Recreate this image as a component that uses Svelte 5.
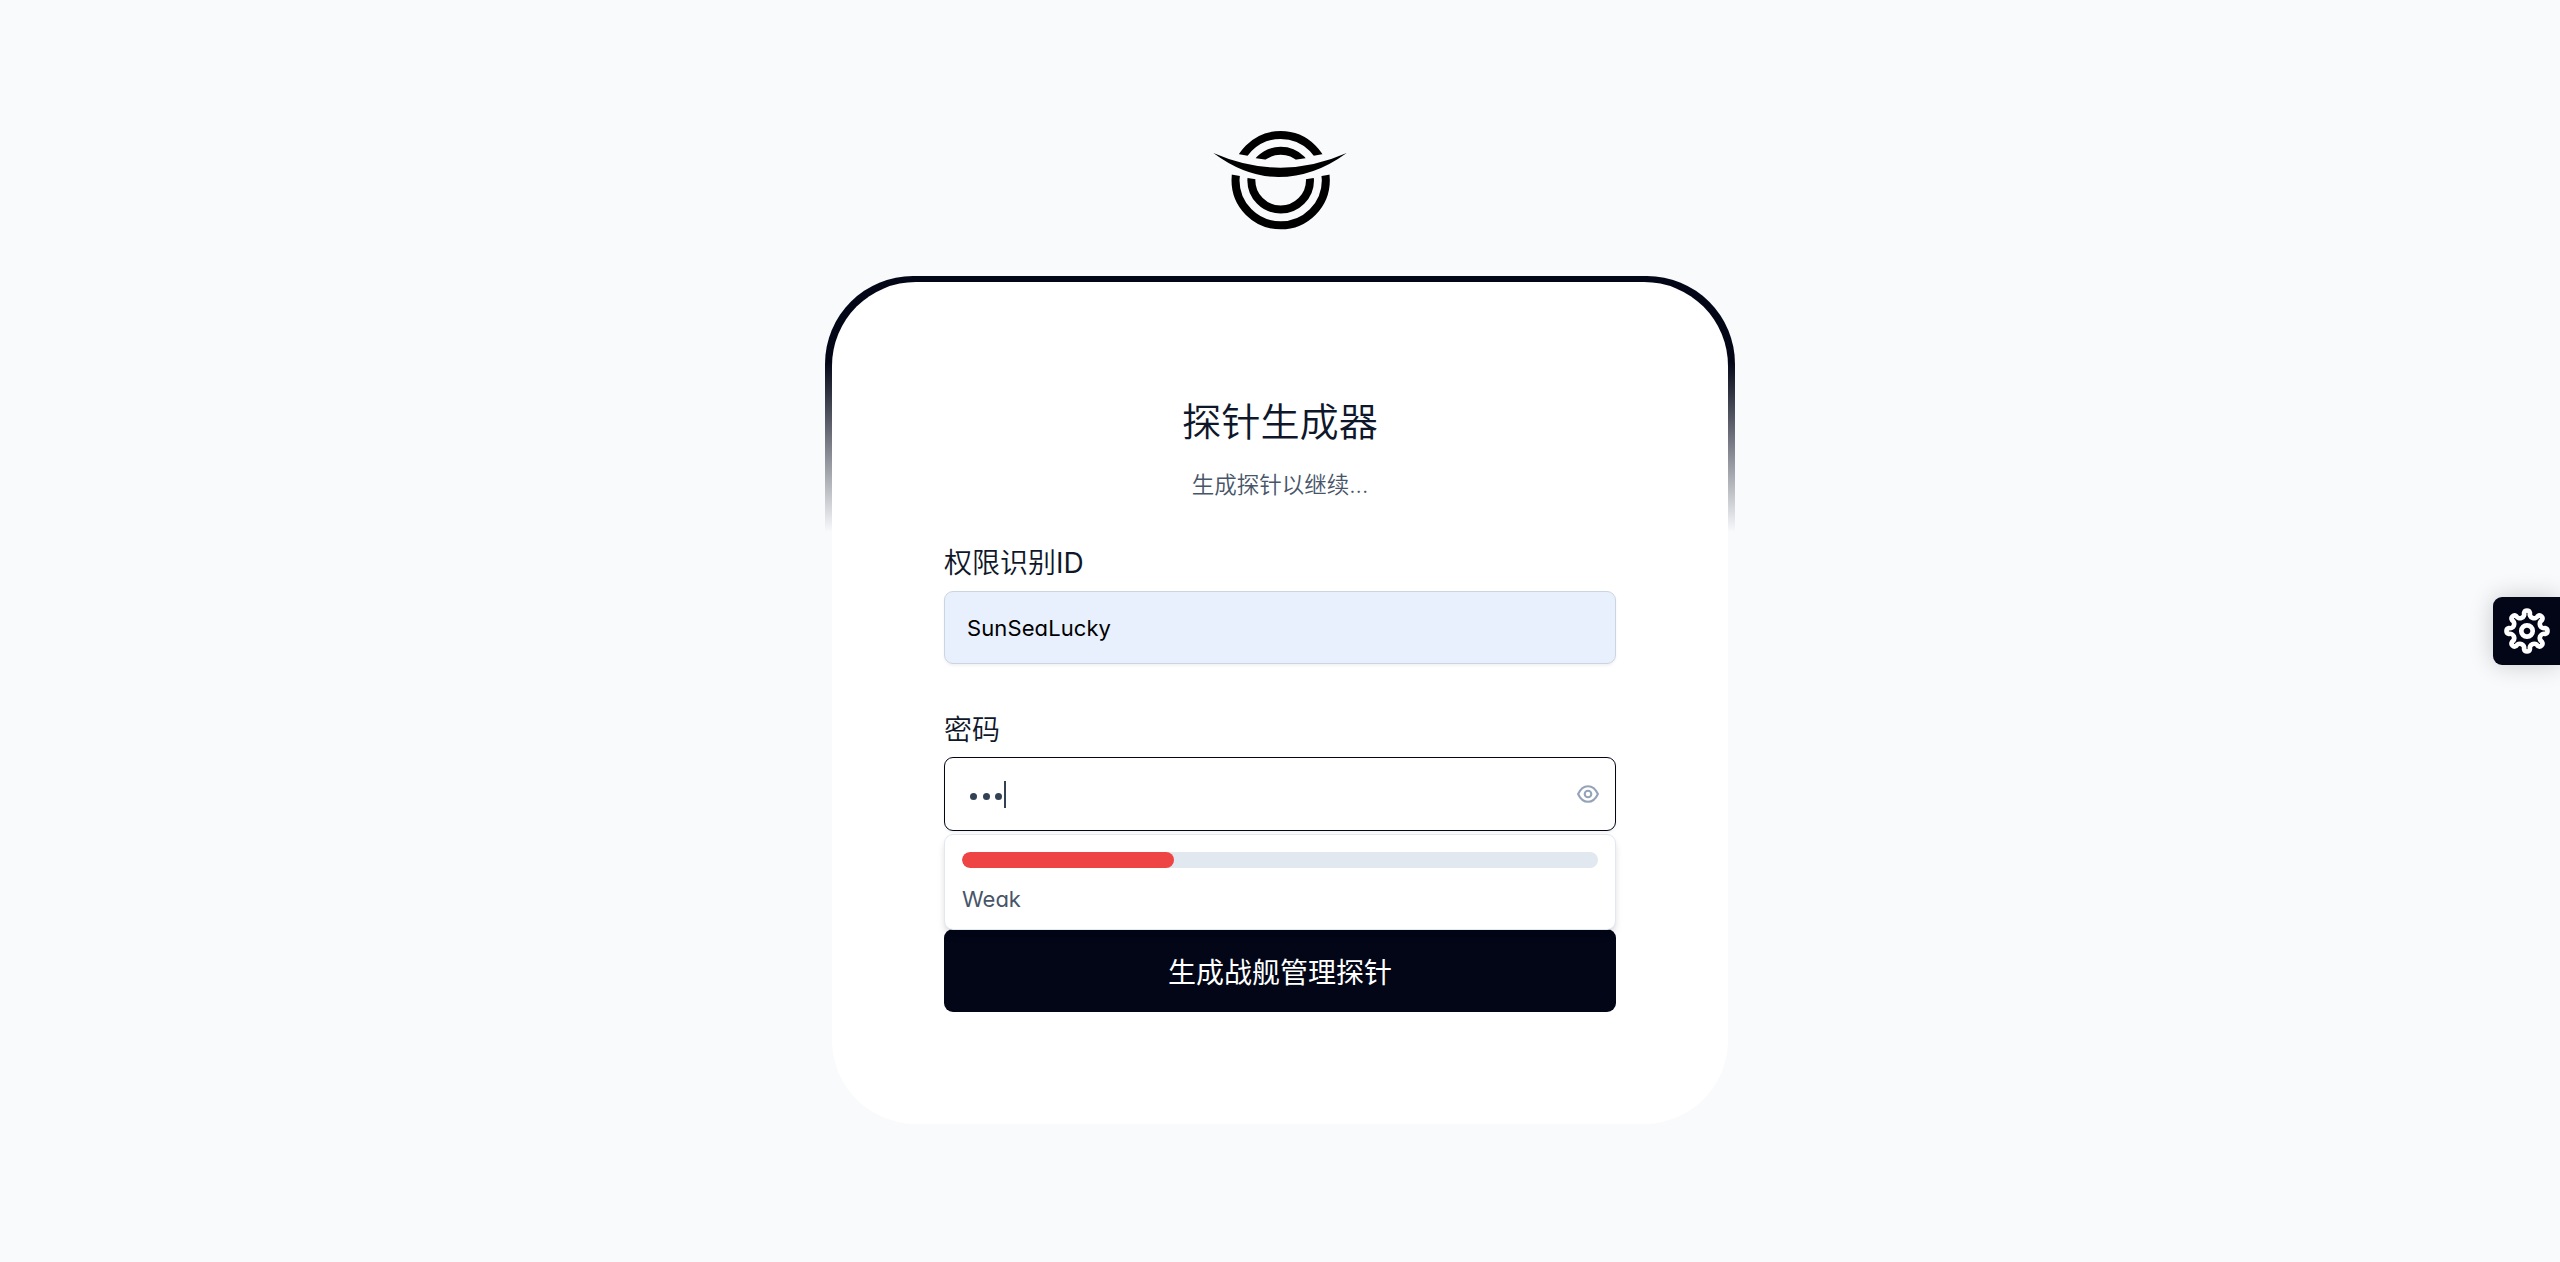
<script>
  let userId = $state('SunSeaLucky');
  let passwordLength = $state(3);
  const strength = { label: 'Weak', value: 33.33 };

  // One lobe plus one valley of the cog outline, repeated every 45 degrees.
  const lobes = Array.from({ length: 8 }, (_, i) => {
    const at = (x, y, a) => {
      const r = (a * Math.PI) / 180;
      return `${(x * Math.cos(r) - y * Math.sin(r)).toFixed(2)} ${(x * Math.sin(r) + y * Math.cos(r)).toFixed(2)}`;
    };
    const a = i * 45;
    return `${i === 0 ? 'M' + at(-2.9, -18.1, a) : ''}A2.95 2.95 0 0 1 ${at(2.9, -18.1, a)}A4.3 4.3 0 0 0 ${at(-2.9, -18.1, a + 45)}`;
  });
  const cogPath = lobes.join('') + 'Z';
</script>

<main class="page">
  <svg class="logo" viewBox="0 0 480 360" aria-label="logo">
    <circle class="ring" cx="242" cy="180.5" r="135.5" />
    <circle class="ring" cx="242" cy="180.5" r="88" />
    <path class="gap" d="M85 96L118 103L147 108L168 115L200 119H285L316 115L337 108L366 103L399 96V162L365 168L341 174L317 178Q242 190 167 178L143 174L120 168L85 162Z" />
    <path d="M40 99Q242 187 440 99Q342 171 235 171Q137 171 40 99Z" />
  </svg>

  <div class="frame">
    <section class="card">
      <h1>探针生成器</h1>
      <p class="subtitle">生成探针以继续...</p>

      <div class="label first">权限识别<span class="latin">ID</span></div>
      <div class="input filled">{userId}</div>

      <div class="label second">密码</div>
      <div class="input focused">
        <div class="dots">
          {#each Array(passwordLength) as _}<span class="dot"></span>{/each}
        </div>
        <span class="caret"></span>
        <svg class="eye" viewBox="0 0 22 18">
          <path d="M1.1 9C3.3 4.2 6.8 1.2 11 1.2S18.7 4.2 20.9 9C18.7 13.8 15.2 16.8 11 16.8S3.3 13.8 1.1 9Z" />
          <circle cx="11" cy="9" r="3.3" />
        </svg>
      </div>

      <div class="below">
        <button type="button">生成战舰管理探针</button>
        <div class="panel">
          <div class="meter"><div class="value" style:width="{strength.value}%"></div></div>
          <div class="strength">{strength.label}</div>
        </div>
      </div>
    </section>
  </div>

  <button class="config" type="button" aria-label="settings">
    <svg viewBox="-23 -23 46 46">
      <path d={cogPath} />
      <circle r="5.7" />
    </svg>
  </button>
</main>

<style>
  :global(body) {
    margin: 0;
    background: #f8fafc;
  }
  .page {
    box-sizing: border-box;
    height: 1262px;
    padding-top: 120px;
    display: flex;
    flex-direction: column;
    align-items: center;
    overflow: hidden;
    background: #f8fafc;
    color: #0f172a;
    font-family: Inter, 'Noto Sans CJK SC', sans-serif;
    font-feature-settings: 'cv02', 'cv03', 'cv04', 'cv11';
  }
  .logo {
    width: 160px;
    height: 120px;
    flex: none;
  }
  .ring {
    fill: none;
    stroke: #000;
    stroke-width: 24;
  }
  .gap {
    fill: #f8fafc;
  }
  .frame {
    margin-top: 36px;
    padding: 6px 7px;
    border-radius: 88px;
    background: linear-gradient(180deg, #020617 10%, rgba(2, 6, 23, 0) 30%);
  }
  .card {
    box-sizing: border-box;
    width: 896px;
    height: 842px;
    padding: 112px 112px 0;
    border-radius: 84px;
    background: #fff;
  }
  h1 {
    margin: 0;
    height: 56px;
    line-height: 56px;
    font-size: 39.2px;
    font-weight: 350;
    text-align: center;
  }
  .subtitle {
    margin: 15px 0 0;
    height: 40px;
    line-height: 40px;
    font-size: 22.5px;
    font-weight: 350;
    text-align: center;
    color: #475569;
  }
  .label {
    height: 40px;
    line-height: 40px;
    font-size: 28px;
    font-weight: 350;
  }
  .latin {
    font-weight: 400;
  }
  .first {
    margin-top: 38px;
  }
  .second {
    margin-top: 46px;
  }
  .input {
    box-sizing: border-box;
    display: flex;
    align-items: center;
    height: 73px;
    margin-top: 8px;
    padding: 0 16px 0 22px;
    border: 1px solid #cbd5e1;
    border-radius: 9px;
    background: #fff;
    font-size: 22px;
    font-weight: 400;
    box-shadow: 0 2px 3px rgba(18, 18, 23, 0.05);
  }
  .filled {
    letter-spacing: 0.1px;
    background: #e8f0fe;
    color: #000;
  }
  .focused {
    height: 74px;
    margin-top: 7px;
    border-color: #020617;
  }
  .dots {
    display: flex;
    gap: 5.5px;
    padding: 4px 0 0 3.2px;
  }
  .dot {
    width: 7px;
    height: 7px;
    border-radius: 50%;
    background: #334155;
  }
  .caret {
    width: 2px;
    height: 27px;
    margin-left: 1.8px;
    background: #334155;
  }
  .eye {
    width: 22px;
    height: 18px;
    margin-left: auto;
    fill: none;
    stroke: #94a3b8;
    stroke-width: 2.1;
  }
  .below {
    position: relative;
    padding-top: 98px;
  }
  .below button {
    display: block;
    width: 672px;
    height: 83px;
    padding: 0;
    border: 0;
    border-radius: 9px;
    background: #020617;
    color: #fff;
    font: inherit;
    font-size: 28px;
    font-weight: 400;
  }
  .panel {
    position: absolute;
    top: 3px;
    left: 0;
    box-sizing: border-box;
    width: 672px;
    height: 96px;
    padding: 17px;
    border: 1px solid #e2e8f0;
    border-radius: 9px;
    background: #fff;
    box-shadow: 0 6px 9px -1px rgba(0, 0, 0, 0.1), 0 3px 6px -2px rgba(0, 0, 0, 0.1);
  }
  .meter {
    height: 16px;
    overflow: hidden;
    border-radius: 9px;
    background: #e2e8f0;
  }
  .value {
    height: 16px;
    border-radius: 9px;
    background: #ef4444;
  }
  .strength {
    margin-top: 16px;
    line-height: 30px;
    font-size: 22px;
    font-weight: 400;
    color: #475569;
  }
  .config {
    position: fixed;
    top: 597px;
    right: 0;
    display: flex;
    align-items: center;
    justify-content: center;
    width: 67px;
    height: 68px;
    padding: 0;
    border: 0;
    border-radius: 9px 0 0 9px;
    background: #020617;
    box-shadow: 0 0 24px rgba(0, 0, 0, 0.2);
  }
  .config svg {
    width: 46px;
    height: 46px;
    margin-top: -1px;
    fill: none;
    stroke: #fff;
    stroke-width: 4.7;
  }
</style>
